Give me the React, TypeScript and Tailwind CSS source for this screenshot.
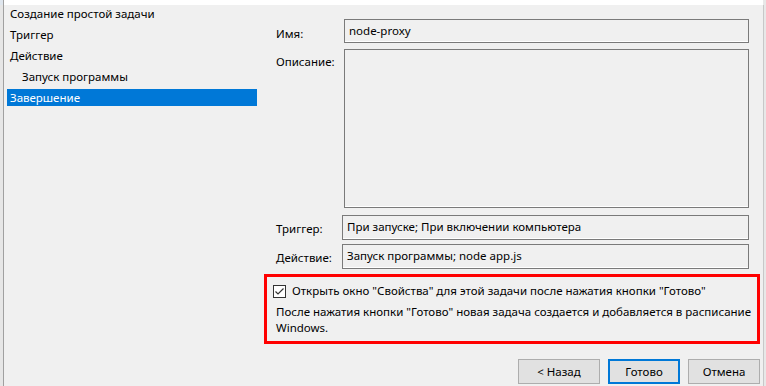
import React from "react";

const font = { fontFamily: '"Segoe UI", "Noto Sans", "Liberation Sans", sans-serif' };

function Field({ children, h = "h-[25px]", w = "w-[406px]" }: { children?: React.ReactNode; h?: string; w?: string }) {
  return (
    <div className={`${w} ${h} shrink-0 border border-[#7a7a7a] bg-[#f0f0f0] px-[4px] pt-[3px] text-[11.5px] leading-[16px] text-black shadow-[inset_0_-1px_0_#ffffff]`}>
      {children}
    </div>
  );
}

export default function App() {
  const navItems = [
    { t: "Создание простой задачи", indent: false },
    { t: "Триггер", indent: false },
    { t: "Действие", indent: false },
    { t: "Запуск программы", indent: true },
    { t: "Завершение", indent: false, sel: true },
  ];
  return (
    <div
      className="w-[766px] h-[386px] overflow-hidden bg-[#f0f0f0] text-[11.5px] text-black flex flex-col"
      style={font}
    >
      <div className="h-[5px] flex shrink-0">
        <div className="w-[3px] bg-[#dfe6ee]" />
        <div className="w-[1px] bg-[#a0a0a0]" />
        <div className="flex-1 bg-white" />
        <div className="w-[3px] bg-[#e8e8e8]" />
      </div>
      <div className="flex flex-1">
        {/* left edge */}
        <div className="w-[3px] shrink-0 bg-[#e6e6e6]" />
        <div className="w-[1px] shrink-0 bg-[#a0a0a0]" />
        {/* nav */}
        <div className="w-[253px] shrink-0 pl-[3px] flex flex-col gap-[4px]">
          {navItems.map((it, i) => (
            <div
              key={i}
              className={`h-[17px] leading-[17px] ${it.sel ? "bg-[#0078d7] text-white" : "text-black"} ${it.indent ? "pl-[15px]" : "pl-[3px]"}`}
            >
              {it.t}
            </div>
          ))}
        </div>
        {/* right panel */}
        <div className="flex-1 flex flex-col pl-[7px]">
          <div className="flex items-start mt-[14px]">
            <div className="w-[80px] shrink-0 pl-[12px] pt-[7px] leading-[16px]">Имя:</div>
            <Field h="h-[24px]" w="w-[405px]">node-proxy</Field>
          </div>
          <div className="flex items-start mt-[6px]">
            <div className="w-[80px] shrink-0 pl-[12px] pt-[5px] leading-[16px]">Описание:</div>
            <Field h="h-[159px]" w="w-[405px]" />
          </div>
          <div className="flex items-start mt-[7px]">
            <div className="w-[78px] shrink-0 pl-[12px] pt-[6px] leading-[16px]">Триггер:</div>
            <Field h="h-[25px]" w="w-[407px]">При запуске; При включении компьютера</Field>
          </div>
          <div className="flex items-start mt-[4px]">
            <div className="w-[78px] shrink-0 pl-[12px] pt-[6px] leading-[16px]">Действие:</div>
            <Field h="h-[25px]" w="w-[407px]">Запуск программы; node app.js</Field>
          </div>
          <div className="mt-[5px] w-[496px] h-[70px] border-[3px] border-[#ff0000] pl-[6px] pt-[6px]">
            <div className="flex items-center gap-[6px] h-[16px]">
              <svg width="13" height="13" viewBox="0 0 13 13" className="shrink-0">
                <rect x="0.5" y="0.5" width="12" height="12" fill="#ffffff" stroke="#333333" />
                <path d="M2.5 6.5 L5 9 L10.5 3.5" fill="none" stroke="#333333" strokeWidth="1.2" />
              </svg>
              <span className="leading-[16px]">Открыть окно "Свойства" для этой задачи после нажатия кнопки "Готово"</span>
            </div>
            <div className="mt-[5px] pl-[3px] w-[484px] leading-[16px]">
              После нажатия кнопки "Готово" новая задача создается и добавляется в расписание Windows.
            </div>
          </div>
          <div className="flex justify-end mt-[15px] w-[496px] gap-[8px]">
            <button className="w-[82px] h-[25px] bg-[#e1e1e1] border border-[#adadad] text-[11.5px]">&lt; Назад</button>
            <button className="w-[72px] h-[25px] bg-[#e1e1e1] border-2 border-[#0078d7] text-[11.5px]">Готово</button>
            <button className="w-[72px] h-[25px] bg-[#e1e1e1] border border-[#adadad] text-[11.5px]">Отмена</button>
          </div>
        </div>
        <div className="w-[3px] shrink-0 bg-[#e8e8e8] border-l border-[#c8c8c8]" />
      </div>
    </div>
  );
}
